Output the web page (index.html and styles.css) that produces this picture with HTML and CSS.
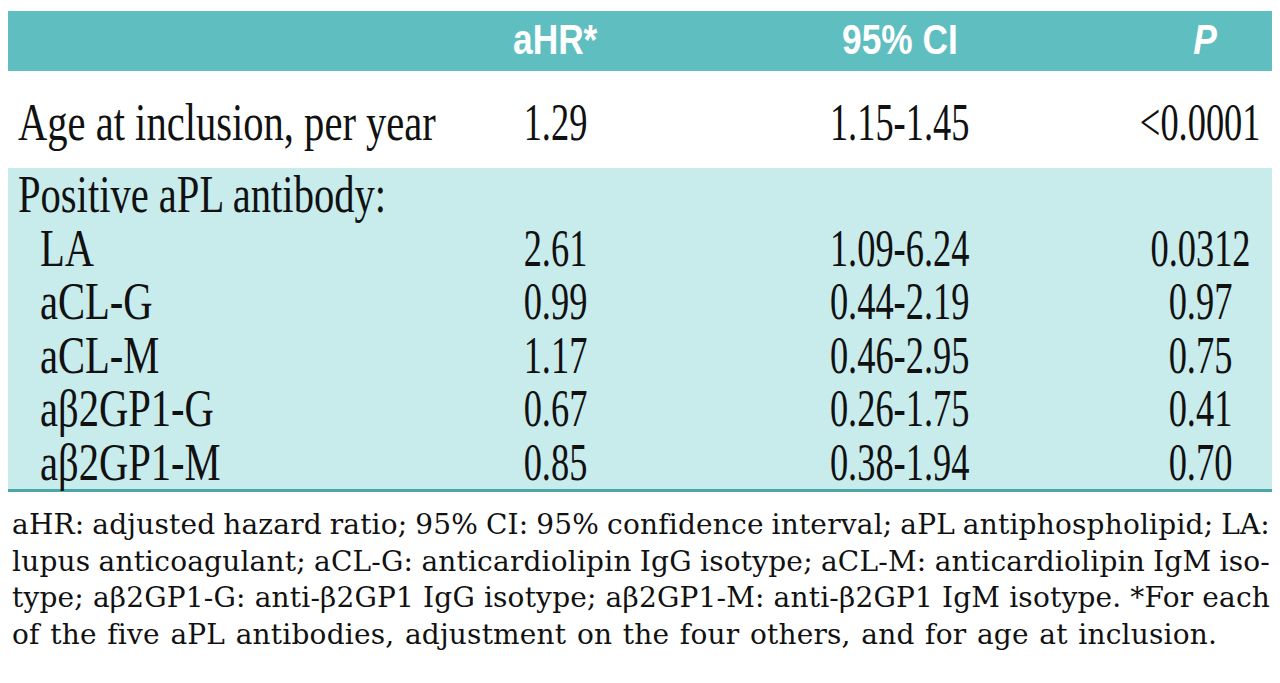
FILE: index.html
```html
<!DOCTYPE html>
<html lang="en">
<head>
<meta charset="utf-8">
<title>aHR table</title>
<link rel="stylesheet" href="styles.css">
</head>
<body>
<div class="page">
  <div class="table">
    <div class="row head">
      <div class="cell"></div>
      <div class="cell c"><span class="h">aHR*</span></div>
      <div class="cell c"><span class="h">95% CI</span></div>
      <div class="cell c"><span class="h it">P</span></div>
    </div>
    <div class="row age">
      <div class="cell"><span class="t">Age at inclusion, per year</span></div>
      <div class="cell c"><span class="n">1.29</span></div>
      <div class="cell c"><span class="n">1.15-1.45</span></div>
      <div class="cell c"><span class="n">&lt;0.0001</span></div>
    </div>
    <div class="group">
      <div class="row">
        <div class="cell"><span class="t">Positive aPL antibody:</span></div>
        <div class="cell c"></div>
        <div class="cell c"></div>
        <div class="cell c"></div>
      </div>
      <div class="row">
        <div class="cell sub"><span class="t">LA</span></div>
        <div class="cell c"><span class="n">2.61</span></div>
        <div class="cell c"><span class="n">1.09-6.24</span></div>
        <div class="cell c"><span class="n">0.0312</span></div>
      </div>
      <div class="row">
        <div class="cell sub"><span class="t">aCL-G</span></div>
        <div class="cell c"><span class="n">0.99</span></div>
        <div class="cell c"><span class="n">0.44-2.19</span></div>
        <div class="cell c"><span class="n">0.97</span></div>
      </div>
      <div class="row">
        <div class="cell sub"><span class="t">aCL-M</span></div>
        <div class="cell c"><span class="n">1.17</span></div>
        <div class="cell c"><span class="n">0.46-2.95</span></div>
        <div class="cell c"><span class="n">0.75</span></div>
      </div>
      <div class="row">
        <div class="cell sub"><span class="t">aβ2GP1-G</span></div>
        <div class="cell c"><span class="n">0.67</span></div>
        <div class="cell c"><span class="n">0.26-1.75</span></div>
        <div class="cell c"><span class="n">0.41</span></div>
      </div>
      <div class="row">
        <div class="cell sub"><span class="t">aβ2GP1-M</span></div>
        <div class="cell c"><span class="n">0.85</span></div>
        <div class="cell c"><span class="n">0.38-1.94</span></div>
        <div class="cell c"><span class="n">0.70</span></div>
      </div>
    </div>
  </div>
  <p class="notes">
    <span class="ln">aHR: adjusted hazard ratio; 95% CI: 95% confidence interval; aPL antiphospholipid; LA:</span>
    <span class="ln">lupus anticoagulant; aCL-G: anticardiolipin IgG isotype; aCL-M: anticardiolipin IgM iso-</span>
    <span class="ln">type; aβ2GP1-G: anti-β2GP1 IgG isotype; aβ2GP1-M: anti-β2GP1 IgM isotype. *For each</span>
    <span class="ln last">of the five aPL antibodies, adjustment on the four others, and for age at inclusion.</span>
  </p>
</div>
</body>
</html>
```

FILE: styles.css
```css
html, body {
  margin: 0;
  padding: 0;
  background: #ffffff;
}

body {
  font-family: "Liberation Serif", "Times New Roman", serif;
  color: #111111;
}

.page {
  width: 1280px;
  box-sizing: border-box;
  padding: 11px 8px 0 8px;
}

.table {
  width: 1264px;
}

.row {
  display: grid;
  grid-template-columns: 447px 200px 490px 110px;
  height: 53.5px;
  font-size: 52px;
  line-height: 53.5px;
  white-space: nowrap;
}

.cell {
  padding-left: 10px;
}

.cell.c {
  padding-left: 0;
  display: flex;
  justify-content: center;
}

.cell.sub {
  padding-left: 32px;
}

.t {
  display: inline-block;
  transform: scaleX(0.78);
  transform-origin: left center;
}

.n {
  display: block;
  flex: none;
  transform: scaleX(0.7);
  transform-origin: center center;
}

.row.head {
  background: #5fbec0;
  height: 60px;
  line-height: 58px;
  font-family: "Liberation Sans", Arial, sans-serif;
  font-weight: bold;
  font-size: 42px;
  color: #ffffff;
}

.h {
  display: block;
  flex: none;
  transform: scaleX(0.84);
  transform-origin: center center;
}

.h.it {
  font-style: italic;
  margin-left: 10px;
}

.row.age {
  height: 97px;
  box-sizing: border-box;
  padding-top: 6px;
  line-height: 91px;
}

.group {
  background: #c8ebec;
  border-bottom: 3px solid #4aa6a8;
}

.notes {
  margin: 15px 2px 0 4px;
  font-family: "DejaVu Serif", "Liberation Serif", serif;
  font-size: 28px;
  line-height: 36.5px;
  letter-spacing: 0.2px;
  word-spacing: -3px;
  color: #111111;
}

.ln {
  display: block;
  text-align: justify;
  text-align-last: justify;
}

.ln.last {
  text-align-last: left;
  word-spacing: 1.5px;
}
```
